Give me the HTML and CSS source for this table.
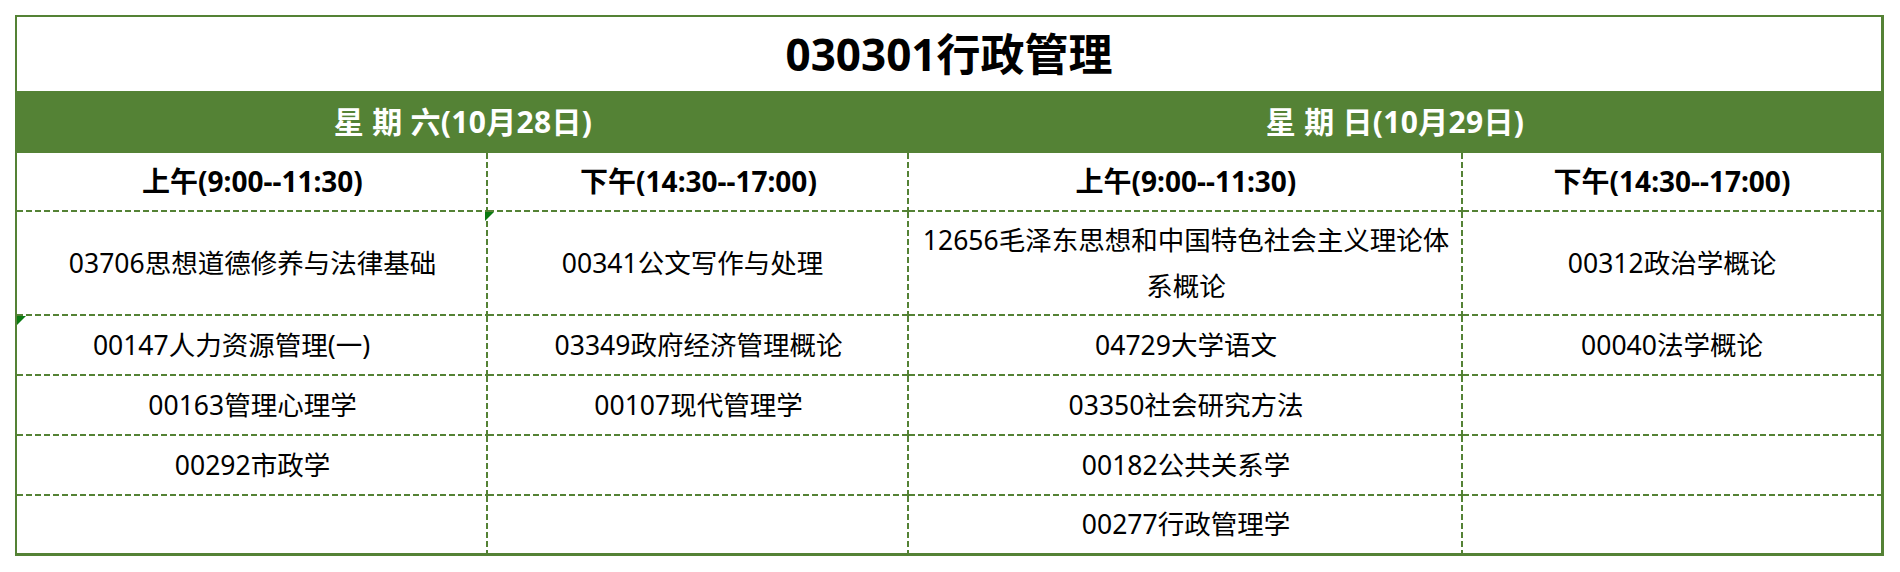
FILE: index.html
```html
<!DOCTYPE html>
<html lang="zh-CN">
<head>
<meta charset="utf-8">
<title>030301行政管理</title>
<link rel="stylesheet" href="styles.css">
</head>
<body>
<div class="sheet">
  <div class="title">030301行政管理</div>
  <div class="days">
    <div class="day">星 期 六(10月28日)</div>
    <div class="day">星 期 日(10月29日)</div>
  </div>
  <div class="body">
    <div class="cell head">上午(9:00--11:30)</div>
    <div class="cell head">下午(14:30--17:00)</div>
    <div class="cell head">上午(9:00--11:30)</div>
    <div class="cell head">下午(14:30--17:00)</div>

    <div class="cell">03706思想道德修养与法律基础</div>
    <div class="cell flag trail-sm">00341公文写作与处理</div>
    <div class="cell wrap">12656毛泽东思想和中国特色社会主义理论体<br>系概论</div>
    <div class="cell">00312政治学概论</div>

    <div class="cell flag flag-edge trail">00147人力资源管理(一)</div>
    <div class="cell">03349政府经济管理概论</div>
    <div class="cell">04729大学语文</div>
    <div class="cell">00040法学概论</div>

    <div class="cell">00163管理心理学</div>
    <div class="cell">00107现代管理学</div>
    <div class="cell">03350社会研究方法</div>
    <div class="cell"></div>

    <div class="cell">00292市政学</div>
    <div class="cell"></div>
    <div class="cell">00182公共关系学</div>
    <div class="cell"></div>

    <div class="cell"></div>
    <div class="cell"></div>
    <div class="cell">00277行政管理学</div>
    <div class="cell"></div>
  </div>
</div>
</body>
</html>
```

FILE: styles.css
```css
* {
  box-sizing: border-box;
}

html, body {
  margin: 0;
  padding: 0;
  background: #ffffff;
}

body {
  font-family: "Noto Sans", "Noto Sans CJK SC", sans-serif;
  color: #000000;
}

.sheet {
  margin: 15px 0 0 15px;
  width: 1869px;
  border-style: solid;
  border-color: #548235;
  border-width: 2px 3px 3px 2px;
  display: grid;
  grid-template-columns: 471px 421px 554px 418px;
}

.title {
  grid-column: 1 / -1;
  height: 74px;
  display: flex;
  align-items: center;
  justify-content: center;
  font-size: 44px;
  font-weight: 700;
  line-height: 1;
}

.days {
  grid-column: 1 / -1;
  display: grid;
  grid-template-columns: 892px 972px;
  height: 62px;
  background: #548235;
}

.day {
  display: flex;
  align-items: center;
  justify-content: center;
  color: #ffffff;
  font-size: 30px;
  font-weight: 700;
  letter-spacing: 0.3px;
  line-height: 1;
}

.body {
  grid-column: 1 / -1;
  display: grid;
  grid-template-columns: 471px 421px 554px 418px;
  grid-template-rows: 59px 104px 60px 60px 60px 57px;
}

.cell {
  position: relative;
  display: flex;
  align-items: center;
  justify-content: center;
  text-align: center;
  font-size: 26.5px;
  line-height: 1.2;
  background:
    repeating-linear-gradient(to right, #548235 0 6px, transparent 6px 9px) left bottom / 100% 2px no-repeat,
    repeating-linear-gradient(to bottom, #548235 0 6px, transparent 6px 9px) right top / 2px 100% no-repeat;
}

.cell:nth-child(4n) {
  background:
    repeating-linear-gradient(to right, #548235 0 6px, transparent 6px 9px) left bottom / 100% 2px no-repeat;
}

.cell:nth-last-child(-n+4) {
  background:
    repeating-linear-gradient(to bottom, #548235 0 6px, transparent 6px 9px) right top / 2px 100% no-repeat;
}

.cell:nth-last-child(1) {
  background: none;
}

.cell.head {
  font-size: 28px;
  font-weight: 700;
  padding-bottom: 2px;
}

.cell.wrap {
  line-height: 46px;
  padding-bottom: 2px;
}

.cell.trail {
  padding-right: 42px;
}

.cell.trail-sm {
  padding-right: 12px;
}

.cell.flag::before {
  content: "";
  position: absolute;
  left: -3px;
  top: 0;
  width: 0;
  height: 0;
  border-top: 9px solid #0b7a12;
  border-right: 9px solid transparent;
}

.cell.flag-edge::before {
  left: 0;
}
```
